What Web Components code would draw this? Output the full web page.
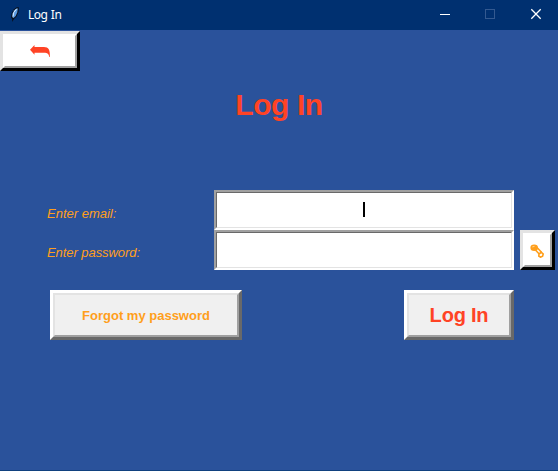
<!DOCTYPE html>
<html lang="en">
<head>
<meta charset="utf-8">
<title>Log In</title>
<style>
html,body{margin:0;height:100%;overflow:hidden}
</style>
</head>
<body>
<login-window></login-window>
<script>
const define = (name, html) => customElements.define(name, class extends HTMLElement {
  constructor() {
    super();
    this.attachShadow({ mode: 'open' }).innerHTML = html;
  }
});

define('title-bar', `
<style>
:host{display:flex;height:30px;background:#003070;color:#fff;font:12px "Noto Sans","Open Sans",sans-serif;align-items:center}
.feather{width:16px;height:16px;margin-left:7px}
.name{margin-left:5px;flex:1;line-height:16px;letter-spacing:-.5px;word-spacing:.8px}
.controls{display:flex}
.controls svg{width:45px;height:30px;display:block}
</style>
<svg class="feather" viewBox="0 0 16 16"><path d="M5.2 15 5.2 12 4 10.5 4.5 6.5 6.5 2.5 9.8.2 11.8.2 11.5 5 9.5 9.5 7 12Z" fill="#0a0f18"/><path d="M5.3 10.2 5.4 6.8 7.2 3.3 9.8 1.2 10.8 1.4 10.3 5.2 8.7 9 6.6 11Z" fill="#5c9ce2"/><path d="M6 9.5 6.8 5.5 9.5 2" fill="none" stroke="#e0efff" stroke-width="1"/></svg>
<span class="name"><slot></slot></span>
<div class="controls">
<svg viewBox="0 0 45 30"><path d="M17 14.5H27" stroke="#fff"/></svg>
<svg viewBox="0 0 45 30"><rect x="17.5" y="9.5" width="9" height="9" fill="none" stroke="#335990"/></svg>
<svg viewBox="0 0 45 30"><path d="M18.3 9.3 27.7 18.7M27.7 9.3 18.3 18.7" stroke="#fff" stroke-width="1.3"/></svg>
</div>`);

define('bevel-button', `
<style>
:host{display:block;box-sizing:border-box;border:3px solid;border-color:#fff #696969 #696969 #fff;background:#f0f0f0;font:bold 13px "Liberation Sans",Arial,sans-serif}
:host([plain]){background:#fff;border-color:#e3e3e3 #000 #000 #e3e3e3}
.face{box-sizing:border-box;height:100%;border:2px solid;border-color:#e3e3e3 #a0a0a0 #a0a0a0 #e3e3e3;display:flex;align-items:center;justify-content:center;white-space:pre}
:host([plain]) .face{border-color:#fff #a0a0a0 #a0a0a0 #fff}
</style>
<div class="face"><slot></slot></div>`);

define('text-entry', `
<style>
:host{display:block;box-sizing:border-box;height:40px;background:#fff;border:2px solid;border-color:#a0a0a0 #fff #fff #a0a0a0}
.field{box-sizing:border-box;height:100%;border:1px solid;border-color:#696969 #e3e3e3 #e3e3e3 #696969;display:flex;justify-content:center;padding-top:9px}
.caret{display:none;width:2px;height:15px;background:#000}
:host([focused]) .caret{display:block}
</style>
<div class="field"><span class="caret"></span></div>`);

define('login-window', `
<style>
:host{display:flex;flex-direction:column;box-sizing:border-box;width:558px;height:471px;background:#2a529b;border-bottom:1px solid #11417f;font-family:"Liberation Sans",Arial,sans-serif}
.back{width:80px;height:40px;margin-top:1px}
.back svg,.key svg{display:block}
h1{margin:17px 0 0;height:34px;font-size:30px;line-height:34px;letter-spacing:-.4px;text-align:center;color:#ff4325}
.form{display:grid;grid-template-columns:167px 300px 41px;grid-template-rows:40px 40px;margin:68px 0 0 47px}
label{grid-column:1;font:italic 13px/16px "Liberation Sans",Arial,sans-serif;color:#ff9f1c;padding-top:16px}
text-entry{grid-column:2}
label.second{padding-top:15px;letter-spacing:-.06px}
.key{grid-column:3;grid-row:2;margin-left:6px;width:35px;height:40px}
.actions{display:flex;justify-content:space-between;margin:20px 44px 0 50px}
.forgot{width:192px;height:50px;color:#ff9f1c}
.submit{width:110px;height:50px;color:#ff4325;font-size:20px;letter-spacing:-.2px}
</style>
<title-bar>Log In</title-bar>
<bevel-button plain class="back"><svg width="22" height="14" viewBox="0 0 22 14"><path d="M1 5.7 5.5 1V3H15C19.5 3 21.3 5.8 20.8 13H20.2C19.8 9.8 18.5 8.8 15 8.8H5.5V10.8Z" fill="#ff4325"/></svg></bevel-button>
<h1>Log In</h1>
<div class="form">
<label>Enter email:</label><text-entry focused></text-entry>
<label class="second">Enter password:</label><text-entry></text-entry>
<bevel-button plain class="key"><svg width="15" height="16" viewBox="0 0 15 16"><path d="M5 7.5 9.2 12M7 5.5 11.5 10.2" stroke="#ff9f1c" stroke-width="1.6"/><ellipse cx="4.2" cy="5.8" rx="3.8" ry="3.3" fill="#ff9f1c"/><path d="M2.3 4.9 4.5 4.4" stroke="#ffe0b0" stroke-width=".8"/><path d="M9 12 11.3 10.3 13.2 12 12.6 14.2 10.5 15.2 8.8 14Z" fill="#fff" stroke="#ff9f1c" stroke-width="1.6"/></svg></bevel-button>
</div>
<div class="actions"><bevel-button class="forgot">Forgot my password</bevel-button><bevel-button class="submit">Log In</bevel-button></div>`);
</script>
</body>
</html>
